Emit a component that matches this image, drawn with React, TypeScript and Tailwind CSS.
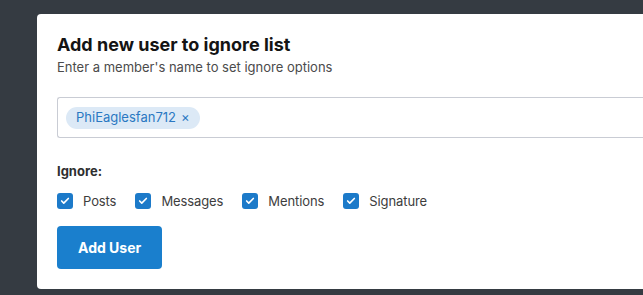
import { Check } from 'lucide-react';

const options = ['Posts', 'Messages', 'Mentions', 'Signature'];

function Checkbox({ label }: { label: string }) {
  return (
    <label className="flex items-center gap-[10px]">
      <span className="flex h-4 w-4 items-center justify-center rounded-[3px] bg-[#1c7ac9]">
        <Check className="h-[10px] w-[10px] text-white" strokeWidth={4} />
      </span>
      <span className="text-[13px] leading-[18px] tracking-[-0.1px] text-[#3d3d3d]">{label}</span>
    </label>
  );
}

export default function App() {
  return (
    <div
      className="h-[295px] w-[643px] overflow-hidden bg-[#353b42] pl-[37px] pt-[14px]"
      style={{ fontFamily: 'Inter, "Noto Sans", sans-serif' }}
    >
      <div className="w-[640px] rounded-[4px] bg-white pb-5 pl-5 pt-5">
        <h2 className="text-[18px] font-bold leading-[22px] text-[#141414]">
          Add new user to ignore list
        </h2>
        <p className="mt-[2px] text-[13px] leading-[18px] text-[#4b4b4b]">
          Enter a member's name to set ignore options
        </p>

        <div className="mt-[21px] flex h-[41px] items-center rounded-l-[3px] border border-r-0 border-[#c9ccd4] pl-2">
          <span className="flex h-[22px] items-center gap-[5px] rounded-full bg-[#dce9f6] px-[10px] text-[13px] text-[#2a78c2]">
            PhiEaglesfan712
            <span className="text-[13px] leading-none">×</span>
          </span>
        </div>

        <div className="mt-6 text-[13px] font-bold leading-[18px] text-[#2f2f2f]">Ignore:</div>

        <div className="mt-3 flex items-center gap-[19px]">
          {options.map((o) => (
            <Checkbox key={o} label={o} />
          ))}
        </div>

        <button className="mt-4 h-[43px] rounded-[4px] bg-[#1a7fcd] px-[21px] text-[14px] font-bold text-white">
          Add User
        </button>
      </div>
    </div>
  );
}
